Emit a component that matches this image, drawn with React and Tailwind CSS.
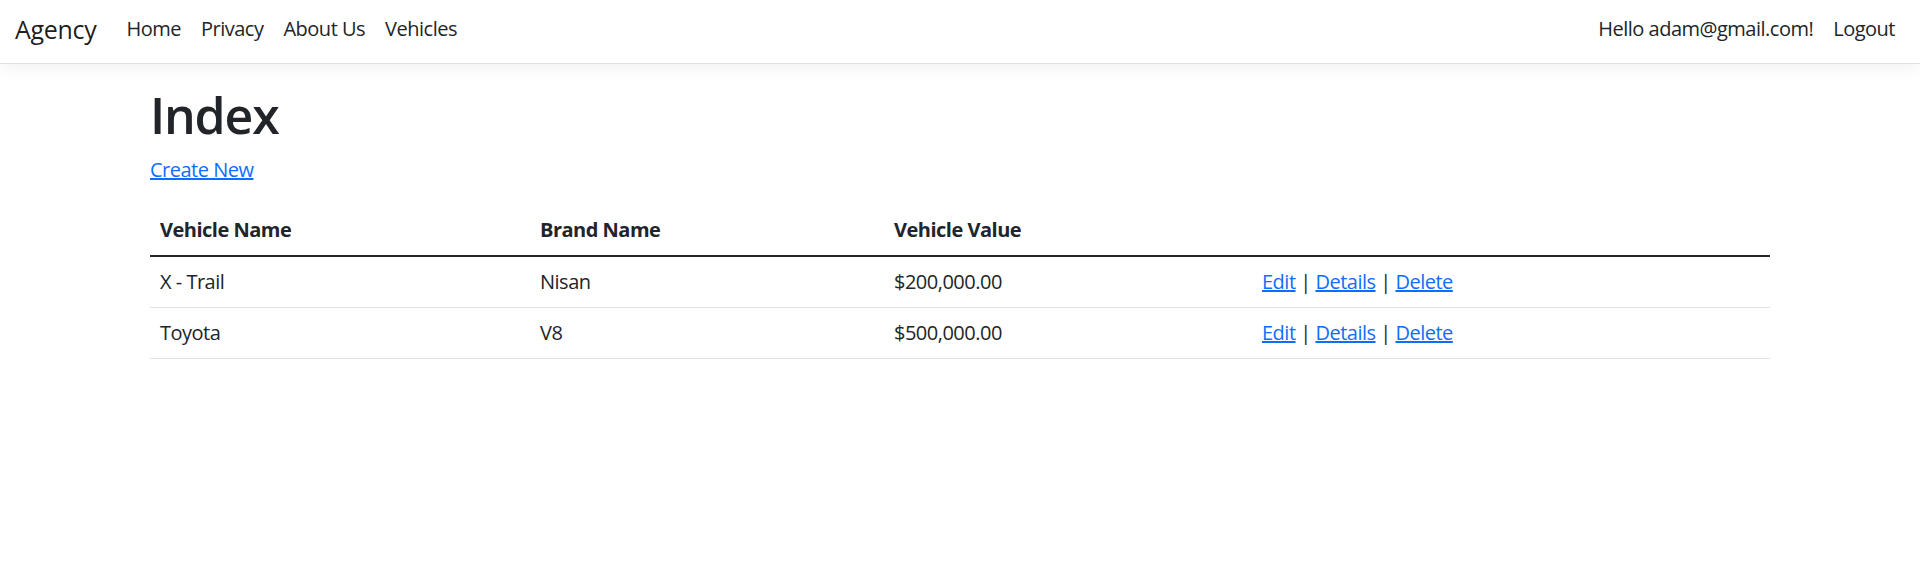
import React from "react";

const vehicles = [
  { name: "X - Trail", brand: "Nisan", value: "$200,000.00" },
  { name: "Toyota", brand: "V8", value: "$500,000.00" },
];

function ActionLinks() {
  return (
    <span>
      <a href="#" className="text-[#0d6efd] underline">Edit</a>
      {" | "}
      <a href="#" className="text-[#0d6efd] underline">Details</a>
      {" | "}
      <a href="#" className="text-[#0d6efd] underline">Delete</a>
    </span>
  );
}

export default function App() {
  return (
    <div
      className="min-h-[581px] bg-white text-[20px] leading-[30px] tracking-[-0.5px] text-[#212529]"
      style={{ fontFamily: '"Open Sans", "Noto Sans", sans-serif' }}
    >
      <nav className="flex h-[64px] items-center border-b border-[#dee2e6] bg-white px-[15px] pb-[5px] shadow-[0_5px_15px_rgba(0,0,0,0.05)]">
        <a href="#" className="mr-[20px] text-[25px] leading-[37px] tracking-[-0.3px] text-[rgba(0,0,0,0.9)]">
          Agency
        </a>
        <ul className="flex">
          {["Home", "Privacy", "About Us", "Vehicles"].map((l) => (
            <li key={l}>
              <a href="#" className="block px-[10px] text-[#212529]">{l}</a>
            </li>
          ))}
        </ul>
        <ul className="ml-auto flex">
          <li>
            <a href="#" className="block px-[10px] text-[#212529]">Hello adam@gmail.com!</a>
          </li>
          <li>
            <a href="#" className="block px-[10px] text-[#212529]">Logout</a>
          </li>
        </ul>
      </nav>

      <main className="mx-auto mt-[21px] max-w-[1650px] px-[15px]">
        <h1 className="mb-[10px] text-[50px] font-semibold leading-[60px] tracking-[-1.2px]">Index</h1>
        <p className="mb-[20px]">
          <a href="#" className="text-[#0d6efd] underline">Create New</a>
        </p>
        <table className="w-full table-fixed border-collapse text-left">
          <colgroup>
            <col className="w-[380px]" />
            <col className="w-[354px]" />
            <col className="w-[368px]" />
            <col />
          </colgroup>
          <thead>
            <tr className="border-b-2 border-[#212529]">
              <th className="p-[10px] font-bold">Vehicle Name</th>
              <th className="p-[10px] font-bold">Brand Name</th>
              <th className="p-[10px] font-bold">Vehicle Value</th>
              <th className="p-[10px]"></th>
            </tr>
          </thead>
          <tbody>
            {vehicles.map((v) => (
              <tr key={v.name} className="border-b border-[#dee2e6]">
                <td className="p-[10px]">{v.name}</td>
                <td className="p-[10px]">{v.brand}</td>
                <td className="p-[10px]">{v.value}</td>
                <td className="p-[10px]"><ActionLinks /></td>
              </tr>
            ))}
          </tbody>
        </table>
      </main>
    </div>
  );
}
